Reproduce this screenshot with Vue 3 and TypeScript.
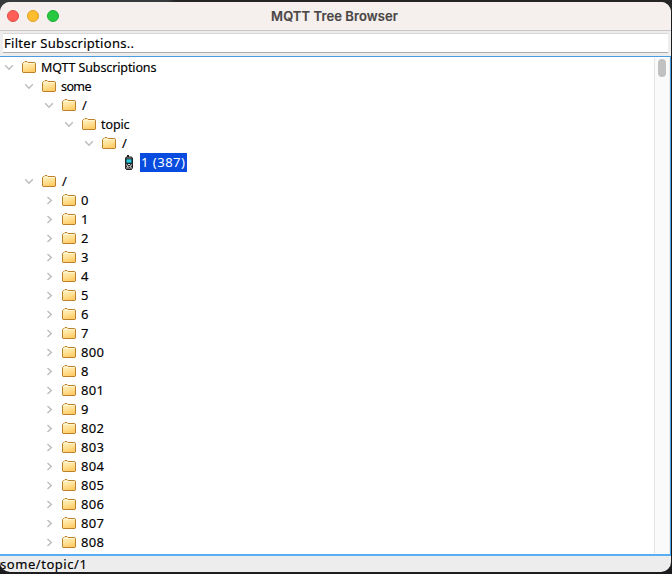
<script setup lang="ts">
import { ref } from 'vue'

interface Row {
  label: string
  depth: number
  kind: 'open' | 'closed' | 'leaf'
  tone?: string
}

const filter = ref('Filter Subscriptions..')
const children = ['0', '1', '2', '3', '4', '5', '6', '7', '800', '8', '801', '9', '802', '803', '804', '805', '806', '807', '808']
const rows: Row[] = [
  { label: 'MQTT Subscriptions', depth: 0, kind: 'open', tone: 'root' },
  { label: 'some', depth: 1, kind: 'open', tone: 'word' },
  { label: '/', depth: 2, kind: 'open', tone: 'slash' },
  { label: 'topic', depth: 3, kind: 'open', tone: 'topic' },
  { label: '/', depth: 4, kind: 'open', tone: 'slash' },
  { label: '1 (387)', depth: 5, kind: 'leaf', tone: 'selected' },
  { label: '/', depth: 1, kind: 'open', tone: 'slash' },
  ...children.map((label): Row => ({ label, depth: 2, kind: 'closed' })),
]
</script>

<template>
  <div class="desktop">
    <main class="window">
      <header class="titlebar">
        <div class="lights"><i class="red" /><i class="yellow" /><i class="green" /></div>
        <h1>MQTT Tree Browser</h1>
      </header>
      <div class="filterbar"><input v-model="filter" spellcheck="false" aria-label="Filter" /></div>
      <section class="pane">
        <ul class="tree">
          <li v-for="(row, i) in rows" :key="i" :style="{ paddingLeft: `${row.depth * 20}px` }">
            <span class="toggle">
              <svg v-if="row.kind === 'open'" width="10" height="7" viewBox="0 0 10 7"><path d="M1.2 1.3 5 5.3 8.8 1.3" /></svg>
              <svg v-else-if="row.kind === 'closed'" class="closed" width="8" height="9" viewBox="0 0 8 9"><path d="M2.5 0.9 6.3 4.5 2.5 8.1" /></svg>
            </span>
            <svg v-if="row.kind === 'leaf'" class="phone" width="16" height="15" viewBox="0 0 16 15">
              <path d="M6 0h2v1.5h2.5l1.5 1.4v10.2L10.5 15H5.5L4 13.4V3l1.5-1.5H6z" fill="#242424" />
              <path d="M5.5 2.6h5v1h-5zM5 9h6v4.7H5z" fill="#8b8b8b" />
              <path d="M5 4h6v4.3H5z" fill="#075867" />
              <path d="M5.7 4.5h4.5v3H5.7z" fill="#2bcbdc" />
              <path d="M6 9h1v1H6zM9 9h1v1H9zM7 10h2v1H7zM5 11h1v1H5zM8 12h1v1H8zM10 11h1v1h-1z" fill="#303030" />
              <path d="M7 9h2v1H7zM6 11h1v1H6zM9 11h1v1H9z" fill="#ccc" />
            </svg>
            <svg v-else class="folder" width="16" height="15" viewBox="0 0 16 15">
              <defs>
                <linearGradient :id="`fold${i}`" x1="0" y1="0" x2="0.35" y2="1">
                  <stop offset="0" stop-color="#fff3c8" />
                  <stop offset="0.5" stop-color="#ffe5a0" />
                  <stop offset="1" stop-color="#ffcd68" />
                </linearGradient>
              </defs>
              <path d="M1.5 12V3.5l1-1H3l1-1h2l1 1h6.8l.7.7V12l-.5.5H2z" :fill="`url(#fold${i})`" stroke="#bd812c" />
              <path d="M2.5 3.5h11" stroke="#fff5cf" />
            </svg>
            <span class="label" :class="row.tone">{{ row.label }}</span>
          </li>
        </ul>
        <div class="scrollbar"><div class="thumb" /></div>
      </section>
      <footer class="status">some/topic/1</footer>
    </main>
  </div>
</template>

<style>
body { margin: 0; background: #242426; }
</style>

<style scoped>
* { box-sizing: border-box; }
.desktop { width: 672px; height: 574px; padding: 2px 1px 2px 0; overflow: hidden; background: linear-gradient(90deg, #373a3d 0 25%, #252525 26%) top / 100% 12px no-repeat, #1c1b1d; }
.window { height: 570px; display: flex; flex-direction: column; overflow: hidden; background: #ededed; border-radius: 10px; font: 400 13px/19px "Noto Sans", "Open Sans", sans-serif; color: #000; -webkit-text-stroke: 0.15px currentColor; }
.titlebar { height: 29px; flex: none; display: grid; grid-template-columns: 112px 1fr 112px; align-items: center; background: #f5f0ee; border-bottom: 1px solid #c9c6c5; }
.lights { display: flex; gap: 8px; padding-left: 7px; }
.lights i { width: 12px; height: 12px; border-radius: 50%; border: 1px solid; }
.lights .red { background: #ff5f57; border-color: #df4d46; }
.lights .yellow { background: #febc2e; border-color: #dda023; }
.lights .green { background: #28c840; border-color: #1fac31; }
h1 { margin: 0; padding-right: 2px; text-align: center; font: 600 13px/18px Inter, sans-serif; letter-spacing: 0.08px; color: #4a4645; }
.filterbar { height: 25px; flex: none; padding: 2px 3px 3px; }
input { display: block; width: 100%; height: 20px; padding: 0 1px; border: 0; border-top: 1px solid #d6d6d6; border-bottom: 1px solid #ababab; border-radius: 0; outline: 0; background: #fff; color: #000; font: 400 13px/18px "Noto Sans", sans-serif; letter-spacing: 0.3px; }
.pane { flex: 1; min-height: 0; display: flex; border: 1px solid #4a9ce0; border-bottom: 2px solid #59adf3; border-left: 0; background: #fff; }
.tree { flex: 1; margin: 0; padding: 1px 0 0 3px; list-style: none; overflow: hidden; }
li { height: 19px; display: flex; align-items: center; }
.toggle { width: 12px; margin-right: 6px; height: 19px; display: flex; align-items: center; justify-content: center; flex: none; }
.toggle path { fill: none; stroke: #bcbcbc; stroke-width: 1.4; }
.folder, .phone { flex: none; margin-right: 2px; }
.label { height: 19px; padding: 0 2px; white-space: pre; letter-spacing: 0.35px; }
.root { font-size: 12.5px; letter-spacing: -0.12px; }
.word { font-size: 12.5px; letter-spacing: -0.6px; }
.topic { font-size: 12.5px; letter-spacing: -0.1px; }
.slash { padding-left: 3px; }
.selected { margin-left: 1px; padding-left: 1px; background: #084cdf; color: #fff; letter-spacing: 0.5px; -webkit-text-stroke: 0; }
.scrollbar { width: 16px; flex: none; margin-top: 1px; padding: 1px 3px; border-left: 1px solid #e6e6e6; border-right: 1px solid #ededed; background: #fafafa; }
.thumb { width: 8px; height: 18px; border-radius: 4px; background: #c1c1c1; }
.status { height: 16px; flex: none; font-size: 13px; line-height: 17px; letter-spacing: 0.55px; }
</style>
